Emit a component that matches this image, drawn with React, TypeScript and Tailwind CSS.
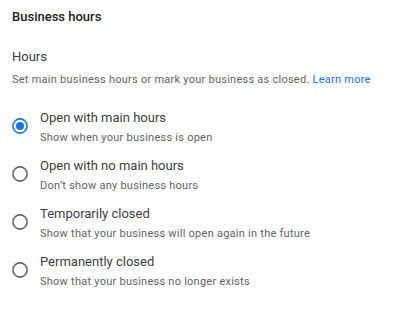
import React from 'react'

const options = [
  { title: 'Open with main hours', desc: 'Show when your business is open', checked: true },
  { title: 'Open with no main hours', desc: 'Don\u2019t show any business hours', checked: false },
  { title: 'Temporarily closed', desc: 'Show that your business will open again in the future', checked: false },
  { title: 'Permanently closed', desc: 'Show that your business no longer exists', checked: false },
]

function Radio({ checked }: { checked: boolean }) {
  return (
    <svg width="16" height="16" viewBox="0 0 16 16" className="shrink-0 mt-[10px]">
      <circle
        cx="8"
        cy="8"
        r="7.1"
        fill="none"
        stroke={checked ? '#1a73e8' : '#5f6368'}
        strokeWidth="1.6"
      />
      {checked && <circle cx="8" cy="8" r="4" fill="#1a73e8" />}
    </svg>
  )
}

export default function App() {
  return (
    <div className="w-[401px] h-[309px] bg-white px-3 font-['Roboto',sans-serif] overflow-hidden">
      <div className="pt-[7px] text-[13px] leading-5 font-medium text-[#202124]">
        Business hours
      </div>

      <div className="mt-[20px] text-[13px] leading-5 text-[#3c4043]">Hours</div>
      <p className="mt-[5px] text-[11px] leading-4 tracking-[0.25px] text-[#5f6368]">
        Set main business hours or mark your business as closed.{' '}
        <span className="text-[#1a73e8]">Learn more</span>
      </p>

      <div className="mt-[20px] flex flex-col gap-[10px]">
        {options.map((o) => (
          <div key={o.title} className="flex items-start gap-3">
            <Radio checked={o.checked} />
            <div>
              <div className="text-[13px] leading-5 text-[#3c4043]">{o.title}</div>
              <div className="mt-[2px] text-[11px] leading-4 tracking-[0.25px] text-[#5f6368]">
                {o.desc}
              </div>
            </div>
          </div>
        ))}
      </div>
    </div>
  )
}
